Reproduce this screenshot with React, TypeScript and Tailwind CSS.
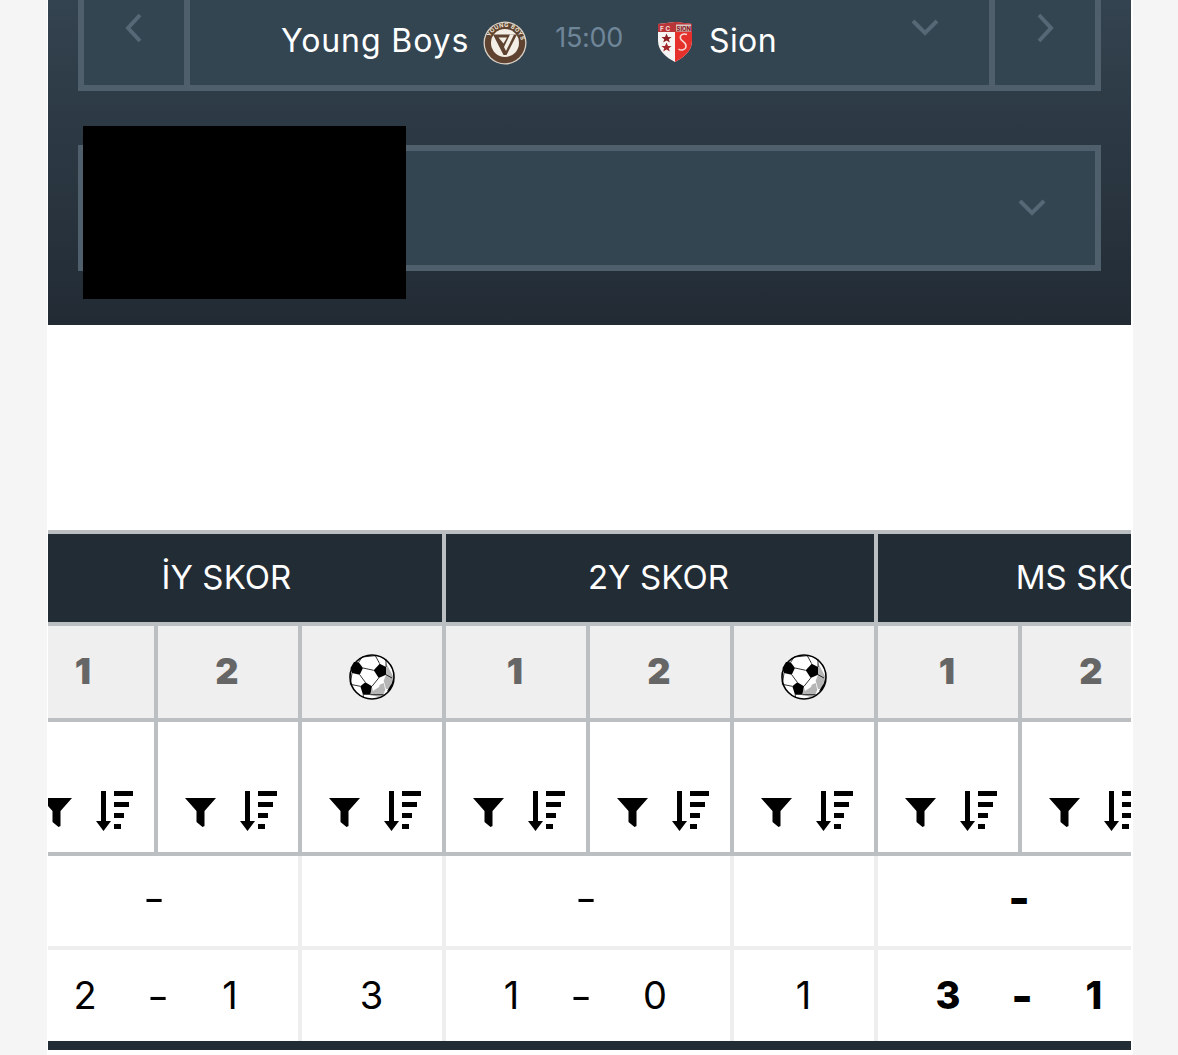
const PANEL_CHEVRON = "#566875";

function Chevron({ dir, className }: { dir: "left" | "right" | "down"; className: string }) {
  const d =
    dir === "left" ? "M15 2 L3 15 L15 28" : dir === "right" ? "M3 2 L15 15 L3 28" : "M2 3 L14 15 L26 3";
  const box = dir === "down" ? "0 0 28 18" : "0 0 18 30";
  return (
    <svg viewBox={box} className={className} fill="none" stroke={PANEL_CHEVRON} strokeWidth="4">
      <path d={d} />
    </svg>
  );
}

function YoungBoysLogo() {
  return (
    <svg viewBox="0 0 44 44" className="w-[44px] h-[44px] shrink-0">
      <circle cx="22" cy="22" r="21.5" fill="#d9d2c6" />
      <circle cx="22" cy="22" r="20.2" fill="#5f4330" />
      <circle cx="22" cy="22" r="14" fill="#f4efe6" />
      <path d="M10 13.5 H34 L23.5 34 H20.5 Z" fill="#5f4330" />
      <path d="M15.5 16.5 H24 L20.5 22.5 Z" fill="#f4efe6" />
      <path d="M27 13.5 H31 L23 30 L21 26 Z" fill="#f4efe6" />
      <path id="yb-arc" d="M6 22 A16 16 0 0 1 38 22" fill="none" />
      <text fontSize="5.6" fontWeight="700" fill="#f0e9dc" fontFamily="Inter, sans-serif" letterSpacing="0.4">
        <textPath href="#yb-arc" startOffset="12%">YOUNG BOYS</textPath>
      </text>
    </svg>
  );
}

function SionCrest() {
  return (
    <svg viewBox="0 0 36 42" className="w-[36px] h-[42px] shrink-0">
      <path d="M1 3 L18 1 L35 3 V20 C35 30 26 37 18 41 C10 37 1 30 1 20 Z" fill="#f7f5f3" />
      <path d="M18 1 L35 3 V20 C35 30 26 37 18 41 Z" fill="#e5302b" />
      <path d="M1 3 L18 1 L35 3 V11 H1 Z" fill="#b8353a" />
      <rect x="19" y="3.5" width="15" height="7" fill="#d6c9c6" />
      <text x="3" y="10" fontSize="6.5" fill="#f7e9e6" fontFamily="Inter, sans-serif" fontWeight="600">F C</text>
      <text x="19.6" y="9.6" fontSize="5.8" fill="#8c2025" fontFamily="Inter, sans-serif" fontWeight="800">SION</text>
      <path d="M9.5 12.5 L11 16 L14.6 16 L11.8 18.2 L12.8 21.6 L9.5 19.6 L6.2 21.6 L7.2 18.2 L4.4 16 L8 16 Z" fill="#8c2025" />
      <path d="M9.5 21.5 L11 25 L14.6 25 L11.8 27.2 L12.8 30.6 L9.5 28.6 L6.2 30.6 L7.2 27.2 L4.4 25 L8 25 Z" fill="#a3262a" />
      <path d="M30 13.5 C26 12 22.5 14 23.5 17.5 C24.5 21 29.5 21 29 25.5 C28.6 29 24 30 21.5 28" fill="none" stroke="#f7d9d4" strokeWidth="1.5" />
    </svg>
  );
}

function Ball() {
  return (
    <svg viewBox="0 0 46 46" className="w-[46px] h-[46px]">
      <circle cx="23" cy="23" r="22" fill="#fff" />
      <path d="M37 9 L44.5 23 L41 35 L37 35 L34.7 26.7 L37 20.7 L37 13 Z" fill="#b5b5b5" />
      <path d="M23 34 L34.7 29 L36.3 35.7 L33 44 L21.3 40.7 Z" fill="#b5b5b5" />
      <path d="M23 33 L32 27.5 L30 33 L24 37 Z" fill="#fff" />
      <path d="M9.7 8.3 L14 14 L10.7 20.7 L3 19 L1.5 14 L5 8 Z" fill="#000" />
      <path d="M24.7 16.3 L30.7 9.7 L37 13 L37 20.7 L29.7 24 Z" fill="#000" />
      <path d="M11.3 32.3 L16.3 28.3 L23 32.3 L21.3 40.7 L14 40.7 Z" fill="#000" />
      <path d="M38 37.3 L43 29 L44 25 L44.8 27 L41 36 Z" fill="#000" />
      <g fill="none" stroke="#000" strokeWidth="0.8">
        <path d="M10.7 20.7 L16.3 28.3 M14 14 L24.7 16.3 M29.7 24 L23 32.3 M9.7 8.3 L13 3 L26.3 1.7 L30.7 9.7 M3 19 L1.3 30.3 L11.3 32.3 M21.3 40.7 L34.7 40.7 M14 40.7 L15 44 M37 13 L37 5 M37 20.7 L43 24" />
      </g>
      <circle cx="23" cy="23" r="22" fill="none" stroke="#000" strokeWidth="1.6" />
    </svg>
  );
}

function Tools() {
  return (
    <div className="flex items-start pt-[69px] pl-[27px] h-full">
      <svg viewBox="0 0 31 30" className="w-[31px] h-[30px] mt-[6px] shrink-0" fill="#000">
        <path d="M0 1 H31 L19.5 14 V29 L17.5 30 L11.5 25 V14 Z" />
      </svg>
      <svg viewBox="0 0 38 40" className="w-[38px] h-[40px] ml-[24px] shrink-0" fill="#000">
        <path d="M5 0 H10 V30 H15 L7.5 40 L0 30 H5 Z" />
        <rect x="18" y="0" width="19" height="5" />
        <rect x="18" y="11" width="15" height="5" />
        <rect x="18" y="22" width="10" height="5" />
        <rect x="18" y="33" width="7" height="5" />
      </svg>
    </div>
  );
}

function HeaderCell({ label }: { label: string }) {
  return (
    <div className="col-span-3 h-[92px] bg-[#222c35] border-r-4 border-b-4 border-[#bcbfc1] flex items-center justify-center text-white text-[33px] tracking-[0.1px] pr-[3px]">
      {label}
    </div>
  );
}

function NumberCell({ children, icon }: { children?: string; icon?: boolean }) {
  return (
    <div className="h-[96px] bg-[#efefef] border-r-4 border-b-4 border-[#bcbfc1] flex items-center justify-center text-[#666666] text-[36px] font-black pb-[3px] pr-[2px]">
      {icon ? (
        <span className="mt-[13px] ml-[1px]">
          <Ball />
        </span>
      ) : (
        children
      )}
    </div>
  );
}

function ToolCell() {
  return (
    <div className="h-[134px] bg-white border-r-4 border-b-4 border-[#bcbfc1]">
      <Tools />
    </div>
  );
}

function App() {
  const groups = ["İY SKOR", "2Y SKOR", "MS SKOR"];
  const numbers = [0, 1, 2];
  return (
    <div className="h-[1055px] w-[1178px] overflow-hidden bg-[#f5f5f5] font-['Inter','Liberation_Sans',sans-serif] text-black">
      <div className="ml-[47px] w-[1086px] h-full bg-white pl-[1px] pr-[2px]">
        <div className="relative h-[325px] bg-gradient-to-b from-[#33434f] to-[#222b34] px-[30px]">
          <div className="flex h-[91px] w-[1023px] bg-[#344552] border-x-[6px] border-b-[6px] border-[#4f5f6c]">
            <div className="w-[100px] shrink-0 flex justify-center pt-[13px]">
              <Chevron dir="left" className="w-[18px] h-[30px]" />
            </div>
            <div className="flex-1 flex border-x-[6px] border-[#4f5f6c] pl-[91px] items-center">
              <span className="text-white text-[32px] tracking-[0.9px] whitespace-nowrap mb-[4px]">Young Boys</span>
              <span className="ml-[14px]">
                <YoungBoysLogo />
              </span>
              <span className="ml-[28px] mb-[8px] text-[#6f8699] text-[27px] font-normal tracking-[-0.3px]">15:00</span>
              <span className="ml-[34px] mb-[1px]">
                <SionCrest />
              </span>
              <span className="ml-[16px] text-white text-[32px] tracking-[0.4px] mb-[4px]">Sion</span>
              <span className="ml-auto mr-[50px] mb-[32px]">
                <Chevron dir="down" className="w-[28px] h-[18px]" />
              </span>
            </div>
            <div className="w-[100px] shrink-0 flex justify-center pt-[13px]">
              <Chevron dir="right" className="w-[18px] h-[30px]" />
            </div>
          </div>
          <div className="mt-[54px] flex h-[126px] w-[1023px] items-center justify-end bg-[#344552] border-[6px] border-[#4f5f6c] pr-[49px] pb-[2px]">
            <Chevron dir="down" className="w-[28px] h-[18px]" />
          </div>
          <div className="absolute left-[35px] top-[126px] w-[323px] h-[173px] bg-black" />
        </div>

        <div className="mt-[205px] overflow-hidden">
          <div className="ml-[-34px] w-[1296px] border-t-4 border-[#bcbfc1]">
            <div className="grid grid-cols-[repeat(9,144px)]">
              {groups.map((g) => (
                <HeaderCell key={g} label={g} />
              ))}
              {groups.map((g) =>
                numbers.map((n) => (
                  <NumberCell key={g + n} icon={n === 2}>
                    {String(n + 1)}
                  </NumberCell>
                ))
              )}
              {groups.map((g) => numbers.map((n) => <ToolCell key={g + n} />))}

              <div className="col-span-2 h-[94px] border-r-4 border-b-4 border-[#eeeeee] flex items-center justify-center text-[50px] leading-none font-light pb-[6px] pr-[4px]">-</div>
              <div className="h-[94px] border-r-4 border-b-4 border-[#eeeeee]" />
              <div className="col-span-2 h-[94px] border-r-4 border-b-4 border-[#eeeeee] flex items-center justify-center text-[50px] leading-none font-light pb-[6px] pr-[4px]">-</div>
              <div className="h-[94px] border-r-4 border-b-4 border-[#eeeeee]" />
              <div className="col-span-2 h-[94px] border-b-4 border-[#eeeeee] flex items-center justify-center text-[46px] leading-none font-extrabold pb-[6px] pr-[6px]">-</div>
              <div className="h-[94px] border-b-4 border-[#eeeeee]" />

              <div className="col-span-2 h-[91px] border-r-4 border-[#eeeeee] grid grid-cols-[144px_0_144px] items-center justify-items-center text-[38px] font-normal">
                <span className="-translate-x-px">2</span>
                <span className="text-[50px] leading-none font-light">-</span>
                <span>1</span>
              </div>
              <div className="h-[91px] border-r-4 border-[#eeeeee] flex items-center justify-center text-[38px] font-normal pr-[1px]">3</div>
              <div className="col-span-2 h-[91px] border-r-4 border-[#eeeeee] grid grid-cols-[135px_0_148px] items-center justify-items-center text-[38px] font-normal">
                <span className="-translate-x-[2px]">1</span>
                <span className="text-[50px] leading-none font-light">-</span>
                <span>0</span>
              </div>
              <div className="h-[91px] border-r-4 border-[#eeeeee] flex items-center justify-center text-[38px] font-normal pr-[1px]">1</div>
              <div className="col-span-2 h-[91px] grid grid-cols-[144px_0_144px] items-center justify-items-center text-[38px] font-extrabold">
                <span className="-translate-x-[2px]">3</span>
                <span className="text-[46px] leading-none">-</span>
                <span>1</span>
              </div>
              <div className="h-[91px]" />
            </div>
            <div className="h-[9px] bg-[#222c35]" />
          </div>
        </div>
      </div>
    </div>
  );
}

export default App;
